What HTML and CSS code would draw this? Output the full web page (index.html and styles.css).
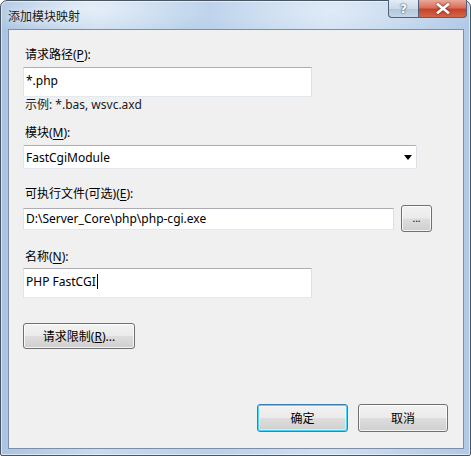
FILE: index.html
```html
<!DOCTYPE html>
<html lang="zh-CN">
<head>
<meta charset="utf-8">
<title>添加模块映射</title>
<link rel="stylesheet" href="styles.css">
</head>
<body>
<div class="window">
  <div class="titlebar">
    <span class="title">添加模块映射</span>
    <div class="caption-btns">
      <div class="cap help"><span>?</span></div>
      <div class="cap close">
        <svg width="14" height="11" viewBox="0 0 14 11"><path d="M2 1.5 L12 9.5 M12 1.5 L2 9.5" stroke="#fff" stroke-width="2.6" stroke-linecap="square" fill="none"/></svg>
      </div>
    </div>
  </div>
  <div class="client">
    <div class="label l-first">请求路径(<u>P</u>):</div>
    <div class="input tall w-short">*.php</div>
    <div class="hint">示例: *.bas, wsvc.axd</div>
    <div class="label l-mod">模块(<u>M</u>):</div>
    <div class="select">
      <span>FastCgiModule</span>
      <svg width="8" height="5" viewBox="0 0 8 5"><path d="M0 0 H8 L4 5 Z" fill="#000"/></svg>
    </div>
    <div class="label l-exe">可执行文件(可选)(<u>E</u>):</div>
    <div class="exe-row">
      <div class="input short-h w-exe">D:\Server_Core\php\php-cgi.exe</div>
      <div class="btn dots">...</div>
    </div>
    <div class="label l-name">名称(<u>N</u>):</div>
    <div class="input tall w-short">PHP FastCGI<span class="caret"></span></div>
    <div class="btn req">请求限制(<u>R</u>)...</div>
    <div class="footer">
      <div class="btn ok default">确定</div>
      <div class="btn cancel">取消</div>
    </div>
  </div>
</div>
</body>
</html>
```

FILE: styles.css
```css
html, body {
  margin: 0;
  padding: 0;
  background: #fff;
}
body {
  font-family: "Noto Sans", "Noto Sans CJK SC", sans-serif;
  font-size: 12px;
  color: #000;
}
.window {
  width: 471px;
  height: 456px;
  box-sizing: border-box;
  border: 1px solid #4a5563;
  border-radius: 7px 7px 2px 2px;
  padding: 0 6px 6px 7px;
  display: flex;
  flex-direction: column;
  background:
    radial-gradient(ellipse 120px 30px at 90px 8px, rgba(255,255,255,0.55), rgba(255,255,255,0) 100%),
    radial-gradient(ellipse 160px 30px at 330px 10px, rgba(255,255,255,0.35), rgba(255,255,255,0) 100%),
    linear-gradient(90deg, #a9c4e2 0%, #c7dbef 20%, #b9d0ea 45%, #cfe0f2 70%, #b0c9e5 100%);
  box-shadow: inset 0 0 0 1px rgba(255,255,255,0.55);
}
.titlebar {
  height: 28px;
  display: flex;
  align-items: flex-start;
  justify-content: space-between;
  margin-right: -3px;
}
.title {
  font-family: "Noto Sans CJK SC", sans-serif;
  font-size: 12px;
  line-height: 16px;
  margin-top: 7px;
  color: #1a1a1a;
  text-shadow: 0 0 6px rgba(255,255,255,0.9);
}
.caption-btns {
  display: flex;
  margin-top: -1px;
}
.cap {
  height: 18px;
  box-sizing: border-box;
  border: 1px solid #50607a;
  border-top: none;
  display: flex;
  align-items: center;
  justify-content: center;
}
.help {
  width: 30px;
  border-right: none;
  border-radius: 0 0 0 4px;
  background: linear-gradient(180deg, #e3ecf6 0%, #cbd9e9 50%, #b3c6dc 52%, #c7d6e6 100%);
}
.help span {
  font-family: "DejaVu Sans", sans-serif;
  font-weight: bold;
  font-size: 12px;
  color: #fff;
  text-shadow: 0 0 1px #3b4a5e, 0 0 2px #3b4a5e;
  line-height: 14px;
}
.close {
  width: 49px;
  border-radius: 0 0 4px 0;
  background: linear-gradient(180deg, #e9a99a 0%, #d8705a 45%, #c7432a 55%, #d1654a 100%);
}
.close svg {
  filter: drop-shadow(0 0 1px #5a1a10);
}
.client {
  flex: 1;
  border: 1px solid #7f8ea2;
  background: #f0f0f0;
  padding: 0 15px 16px 14px;
  display: flex;
  flex-direction: column;
  align-items: flex-start;
}
.label {
  line-height: 16px;
  height: 16px;
  padding-left: 2px;
  white-space: nowrap;
}
.label u {
  text-decoration-thickness: 1px;
  text-underline-offset: 2px;
}
.l-first { margin-top: 17px; margin-bottom: 4px; }
.l-mod { margin-top: 12px; margin-bottom: 4px; }
.l-exe { margin-top: 17px; margin-bottom: 3px; }
.l-name { margin-top: 17px; margin-bottom: 3px; }
.hint {
  line-height: 16px;
  height: 16px;
  padding-left: 2px;
  color: #1a1a1a;
}
.input {
  box-sizing: border-box;
  background: #fff;
  border: 1px solid;
  border-color: #abadb3 #dbdfe6 #e3e9ef #e2e3ea;
  padding: 0 2px;
  display: flex;
  align-items: center;
  white-space: nowrap;
}
.tall { height: 30px; padding-bottom: 3px; }
.short-h { height: 22px; }
.w-short { width: 289px; }
.w-exe { width: 371px; }
.caret {
  display: inline-block;
  width: 1px;
  height: 15px;
  background: #000;
  margin-left: 1px;
}
.select {
  box-sizing: border-box;
  width: 394px;
  height: 24px;
  background: #fff;
  border: 1px solid;
  border-color: #abadb3 #dbdfe6 #e3e9ef #e2e3ea;
  border-radius: 2px;
  padding: 0 4px 0 2px;
  display: flex;
  align-items: center;
  justify-content: space-between;
}
.exe-row {
  display: flex;
  align-items: center;
  gap: 7px;
}
.btn {
  box-sizing: border-box;
  border: 1px solid #707070;
  border-radius: 3px;
  background: linear-gradient(180deg, #f2f2f2 0%, #ebebeb 48%, #dddddd 52%, #cfcfcf 100%);
  box-shadow: inset 0 0 0 1px rgba(255,255,255,0.75);
  display: flex;
  align-items: center;
  justify-content: center;
  white-space: nowrap;
}
.dots {
  width: 31px;
  height: 27px;
  font-size: 10px;
  padding-bottom: 2px;
}
.req {
  margin-top: 25px;
  width: 112px;
  height: 26px;
}
.footer {
  margin-top: auto;
  align-self: stretch;
  display: flex;
  justify-content: flex-end;
  gap: 10px;
}
.ok { width: 91px; height: 28px; }
.cancel { width: 90px; height: 28px; }
.default {
  border-color: #3c7fb1;
  box-shadow: inset 0 0 0 1px #48d8fb, inset 0 0 0 2px rgba(255,255,255,0.4);
  background: linear-gradient(180deg, #eaf6fd 0%, #d9f0fc 48%, #bee6fd 52%, #a7d9f5 100%);
}
.ok.default {
  background: linear-gradient(180deg, #f2f2f2 0%, #ebebeb 48%, #dddddd 52%, #cfcfcf 100%);
}
```
